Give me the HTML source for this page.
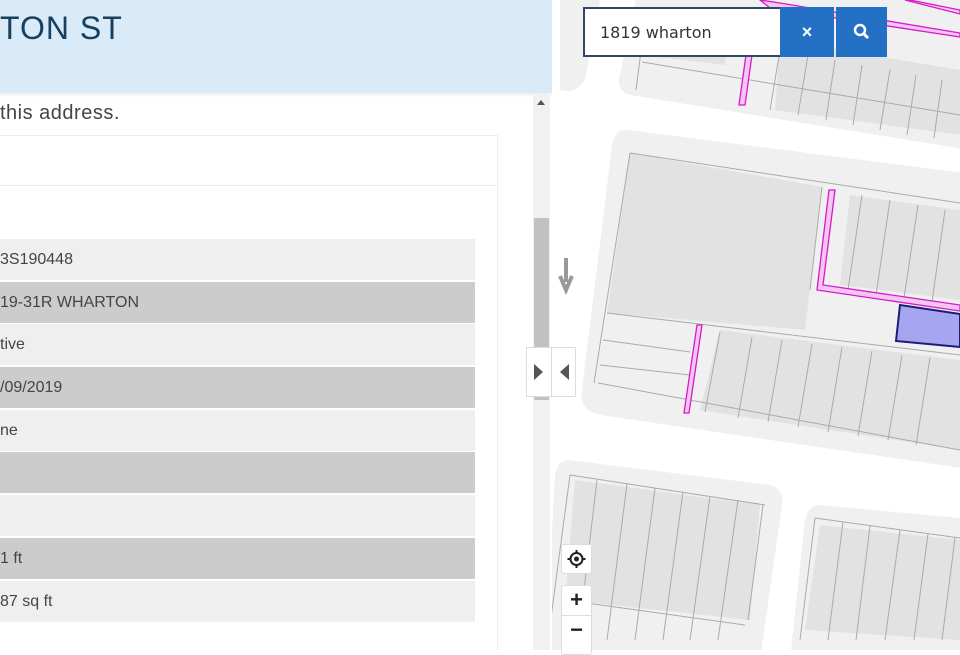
<!DOCTYPE html>
<html><head><meta charset="utf-8"><style>
*{margin:0;padding:0;box-sizing:border-box}
body{width:960px;height:650px;overflow:hidden;position:relative;background:#fff;font-family:"Liberation Sans",sans-serif}
#left{position:absolute;left:0;top:0;width:552px;height:650px;background:#fff;overflow:hidden}
#hdr{position:absolute;left:0;top:0;width:552px;height:93px;background:#d9eaf9;box-shadow:0 2px 3px rgba(0,0,0,.08)}
#hdr h1{position:absolute;left:0;top:10px;font-weight:normal;font-size:32px;color:#17405e;letter-spacing:1px}
#sub{position:absolute;left:0;top:102px;font-size:20px;color:#444;letter-spacing:.5px}
#card{position:absolute;left:-2px;top:135px;width:500px;height:530px;border:1px solid #eee;background:#fff}
#card .ln{position:absolute;left:0;top:49px;width:498px;border-top:1px solid #eee}
.row{position:absolute;left:0;width:475px;height:41px;font-size:16px;color:#444;line-height:41px;padding-left:0}
.l{background:#efefef}.d{background:#cccccc}
#sb{position:absolute;left:533px;top:95px;width:17px;height:555px;background:#f1f1f1}
#thumb{position:absolute;left:534px;top:218px;width:15px;height:182px;background:#c1c1c1}
#map{position:absolute;left:552px;top:0;width:408px;height:650px}
#search{position:absolute;left:583px;top:7px;width:198px;height:50px;border:2px solid #2e4a66;border-right:none;background:#fff;font-family:"DejaVu Sans",sans-serif;font-size:16px;color:#333;padding:14px 0 0 15px}
.btn{position:absolute;top:7px;height:50px;background:#2470c4;color:#fff;text-align:center}
.ctl{position:absolute;background:#fff;border:1px solid #ddd;border-radius:3px}
</style></head><body>
<div id="map">
<svg width="408" height="650" viewBox="552 0 408 650">
<rect x="552" y="0" width="408" height="650" fill="#fff"/>
<g fill="#f0f0f0">
<path d="M640,-20 L980,-10 L970,150 L630,95 Q615,90 620,75 Z"/>
<path d="M560,0 L600,0 L585,80 Q575,95 560,90 Z"/>
<path d="M628,130 L980,175 L975,470 L600,415 Q578,410 582,390 L612,145 Q615,128 628,130 Z"/>
<path d="M568,460 L770,485 Q785,490 782,505 L760,660 L545,660 L555,475 Q558,460 568,460 Z"/>
<path d="M820,505 L980,520 L980,660 L790,660 L805,520 Q808,505 820,505 Z"/>
</g>
<g fill="#e2e2e2">
<path d="M630,153 L822,187 L805,330 L607,313 Z"/>
<path d="M640,10 L730,20 L725,65 L640,55 Z"/>
<path d="M780,40 L960,70 L960,135 L775,110 Z"/>
<path d="M850,195 L960,210 L960,300 L840,285 Z"/>
<path d="M720,330 L960,360 L960,450 L700,410 Z"/>
<path d="M575,480 L760,505 L750,620 L565,600 Z"/>
<path d="M820,525 L960,540 L960,640 L805,630 Z"/>
</g>
<g stroke="#aaa" stroke-width="1" fill="none">
<path d="M630,153 L960,203 M607,313 L960,355 M598,383 L960,450"/>
<path d="M630,153 L594,383 M822,187 L810,290"/>
<path d="M603,340 L690,352 M600,365 L690,375"/>
<path d="M720,332 L705,412 M752,337 L738,418 M782,340 L768,422 M812,344 L798,427 M842,347 L828,432 M872,351 L858,436 M902,355 L888,440 M930,358 L916,445"/>
<path d="M862,195 L848,290 M890,200 L876,295 M918,205 L904,298 M945,210 L932,302"/>
<path d="M642,62 L960,115 M645,20 L636,90 M780,50 L770,110 M808,55 L798,115 M835,60 L826,120 M862,65 L853,125 M890,70 L880,130 M916,75 L907,135 M942,80 L934,138"/>
<path d="M570,475 L765,505 M565,600 L745,625 M570,475 L548,640 M597,480 L578,640 M627,484 L607,640 M655,488 L635,640 M683,492 L663,640 M710,496 L690,640 M738,500 L718,640 M763,505 L748,620"/>
<path d="M815,518 L960,538 M815,518 L800,640 M843,522 L828,640 M870,526 L856,640 M900,530 L885,640 M928,534 L914,640 M955,538 L942,640"/>
</g>
<g stroke="#d51bc9" stroke-width="1.3" fill="#f6c6f2">
<path d="M829,190 L835,190 L823,285 L960,305 L960,311 L817,290 Z"/>
<path d="M697,325 L702,325 L689,413 L684,413 Z"/>
<path d="M746,55 L752,55 L745,105 L739,105 Z"/>
<path d="M760,0 L780,3 L960,33 L960,37 L770,8 Z"/>
<path d="M905,0 L910,0 L960,10 L960,14 Z"/>
</g>
<path d="M900,305 L960,314 L960,347 L896,341 Z" fill="#a6a6f0" stroke="#1c1c7a" stroke-width="2"/>
<path d="M566,258 L566,282 M560,276 L566,290 L572,276" stroke="#999" stroke-width="4" fill="none"/>
</svg>
</div>
<div id="left">
<div id="hdr"><h1>TON ST</h1></div>
<div id="sub">this address.</div>
<div id="card"><div class="ln"></div></div>
<div class="row l" style="top:239px">3S190448</div>
<div class="row d" style="top:282px">19-31R WHARTON</div>
<div class="row l" style="top:324px">tive</div>
<div class="row d" style="top:367px">/09/2019</div>
<div class="row l" style="top:410px">ne</div>
<div class="row d" style="top:452px"></div>
<div class="row l" style="top:495px"></div>
<div class="row d" style="top:538px">1 ft</div>
<div class="row l" style="top:581px">87 sq ft</div>
<div id="sb"></div><div id="thumb"></div>
<div style="position:absolute;left:537px;top:100px;width:0;height:0;border-left:4px solid transparent;border-right:4px solid transparent;border-bottom:5px solid #555"></div>
</div>
<div style="position:absolute;left:526px;top:347px;width:50px;height:50px;background:#fff;border:1px solid #ddd"></div>
<div style="position:absolute;left:551px;top:347px;width:1px;height:50px;background:#ddd"></div>
<div style="position:absolute;left:534px;top:364px;border-top:8px solid transparent;border-bottom:8px solid transparent;border-left:9px solid #555"></div>
<div style="position:absolute;left:560px;top:364px;border-top:8px solid transparent;border-bottom:8px solid transparent;border-right:9px solid #555"></div>
<div id="search">1819 wharton</div>
<div class="btn" style="left:780px;width:54px;font-size:18px;line-height:50px;font-weight:bold">×</div>
<div class="btn" style="left:836px;width:51px"><svg width="51" height="50"><circle cx="24" cy="23" r="5" stroke="#fff" stroke-width="2.5" fill="none"/><path d="M28,27 L32,31" stroke="#fff" stroke-width="3"/></svg></div>
<div class="ctl" style="left:561px;top:544px;width:31px;height:30px"><svg width="29" height="28"><circle cx="14.5" cy="14" r="6" stroke="#222" stroke-width="2" fill="none"/><circle cx="14.5" cy="14" r="2.5" fill="#222"/><path d="M14.5,5 V8 M14.5,20 V23 M5.5,14 H8.5 M20.5,14 H23.5" stroke="#222" stroke-width="2"/></svg></div>
<div class="ctl" style="left:561px;top:585px;width:31px;height:70px"><div style="position:absolute;top:0;left:0;width:29px;height:29px;text-align:center;font-size:22px;line-height:28px;font-weight:bold;color:#222">+</div><div style="position:absolute;top:29px;left:0;width:29px;border-top:1px solid #ddd"></div><div style="position:absolute;top:30px;left:0;width:29px;text-align:center;font-size:22px;line-height:28px;font-weight:bold;color:#222">−</div></div>
</body></html>
